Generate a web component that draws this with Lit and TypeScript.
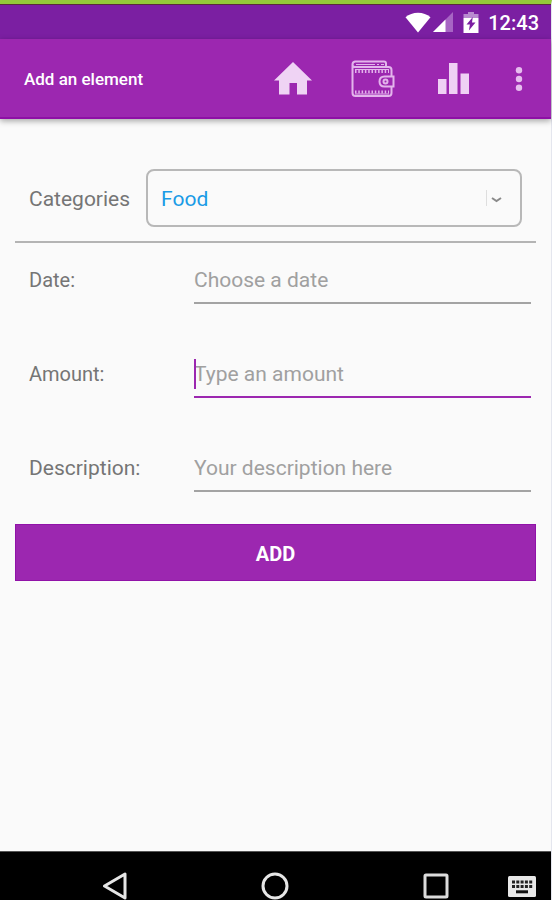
import { LitElement, html, css } from "lit";
import { customElement, state } from "lit/decorators.js";

@customElement("status-bar")
class StatusBar extends LitElement {
  static styles = css`
    :host {
      display: flex;
      align-items: center;
      justify-content: flex-end;
      height: 35px;
      padding: 1px 12px 0 0;
      background: #7b1fa2;
      border-top: 1px solid #5a2a3c;
      box-sizing: border-box;
      color: #fff;
    }
    .wifi { margin-right: 2px; }
    .signal, .battery { margin-right: 9px; }
    .clock {
      font-size: 20px;
      line-height: 24px;
      font-weight: 500;
    }
    svg { display: block; }
  `;

  render() {
    return html`
      <svg class="wifi" width="26" height="22" viewBox="0 0 26 22" aria-hidden="true">
        <path fill="#fff" d="M13 20.500 0.500 5.300C4 2.200 8.200 0.700 13 0.700s9 1.500 12.500 4.600z" />
      </svg>
      <svg class="signal" width="21" height="21" viewBox="0 0 21 21" aria-hidden="true">
        <path fill="#a765c4" d="M20 0v20H0z" />
        <path fill="#fff" d="M12.500 7.500v12.500H0z" />
      </svg>
      <svg class="battery" width="16" height="22" viewBox="0 0 16 22" aria-hidden="true">
        <path fill="#b98ad0" d="M5 0h6v2h4.500v4H0.500v-4H5z" />
        <path fill="#fff" d="M0.500 6h15v15H0.500z" />
        <path fill="#7b1fa2" d="M9.800 5 3.500 12.500h3.400l-1 6L12.500 10.500H9z" />
      </svg>
      <span class="clock">12:43</span>
    `;
  }
}

@customElement("app-bar")
class AppBar extends LitElement {
  static styles = css`
    :host {
      display: flex;
      align-items: center;
      height: 80px;
      padding: 2px 16px 0 24px;
      box-sizing: border-box;
      background: #9c27b0;
      border-bottom: 2px solid #8e0fa6;
      box-shadow: 0 2px 6px rgba(0, 0, 0, 0.35);
      position: relative;
      color: #fff;
    }
    h1 {
      flex: 1;
      margin: 0;
      font-size: 17px;
      line-height: 24px;
      font-weight: 500;
    }
    nav { display: flex; align-items: center; }
    button {
      display: grid;
      place-items: center;
      height: 48px;
      width: 80px;
      padding: 0;
      border: 0;
      background: none;
      cursor: pointer;
    }
    .more { width: 32px; margin-left: 10px; }
    svg { display: block; }
  `;

  render() {
    return html`
      <h1>Add an element</h1>
      <nav>
        <button aria-label="Home">
          <svg width="40" height="34" viewBox="0 0 40 34">
            <path fill="#efd3f4" d="M20 0 39 18.500H34V32.500H24V21H16.500V32.500H6V18.500H1z" />
          </svg>
        </button>
        <button aria-label="Wallet">
          <svg width="44" height="38" viewBox="0 0 44 38" fill="none" stroke="#e3b4ec" stroke-width="2">
            <path d="M1.500 4.500V33q0 3 3 3H37.500q3 0 3-3V26.500M40.500 16.500V10q0-3-3-3H4q-2.500 0-2.500-2.500T4 1.500H33q2 0 2 2V7" />
            <path d="M5 4.500H24M26 4.500h2M30 4.500h3" stroke-width="1" />
            <path d="M42.500 16.500H33.500q-5 0-5 5t5 5h9z" />
            <circle cx="34.500" cy="21.500" r="2" />
            <path d="M4 11.500H38M4 32H38" stroke-width="3" stroke-dasharray="1.500 1.800" />
            <path d="M4 9.500H38M4 34H38" stroke-width="1" />
          </svg>
        </button>
        <button aria-label="Statistics">
          <svg width="32" height="32" viewBox="0 0 32 32" fill="#efd0f4">
            <path d="M1 16h8.500v15H1zM12 0h8.500v31h-8.500zM23.500 10.500H32V31h-8.500z" />
          </svg>
        </button>
        <button class="more" aria-label="More options">
          <svg width="8" height="24" viewBox="0 0 8 24" fill="#e6bdee">
            <circle cx="4" cy="3.300" r="3.200" />
            <circle cx="4" cy="12" r="3.200" />
            <circle cx="4" cy="20.700" r="3.200" />
          </svg>
        </button>
      </nav>
    `;
  }
}

@customElement("expense-form")
class ExpenseForm extends LitElement {
  @state() private category = "Food";

  static styles = css`
    :host {
      display: block;
      padding: 50px 15px 0;
    }
    form { display: flex; flex-direction: column; }
    .category {
      display: flex;
      align-items: center;
      gap: 16px;
      padding: 0 14px 14px;
      border-bottom: 2px solid #b4b4b4;
    }
    label {
      color: #757575;
      font-size: 20px;
      line-height: 28px;
    }
    .wide { font-size: 21px; }
    .category label { padding-top: 2px; }
    .picker {
      flex: 1;
      display: grid;
      align-items: center;
    }
    .picker > * { grid-area: 1 / 1; }
    .picker svg { justify-self: end; margin-right: 17px; pointer-events: none; }
    select {
      appearance: none;
      width: 100%;
      height: 58px;
      padding: 2px 48px 0 13px;
      border: 2px solid #b8b8b8;
      border-radius: 8px;
      background: transparent;
      color: #1a9be6;
      font: inherit;
      font-size: 21px;
      outline: none;
    }
    .rows { padding-top: 12px; }
    .row {
      display: grid;
      grid-template-columns: 165px 1fr;
      align-items: center;
      padding: 0 5px 0 14px;
      margin-bottom: 45px;
    }
    .row:last-child { margin-bottom: 32px; }
    input {
      min-width: 0;
      width: 100%;
      height: 49px;
      box-sizing: border-box;
      padding: 2px 0 0;
      border: 0;
      border-bottom: 2px solid #a3a3a3;
      border-radius: 0;
      background: transparent;
      color: #424242;
      font: inherit;
      font-size: 21px;
      outline: none;
    }
    input::placeholder { color: #a0a0a0; opacity: 1; }
    .field { display: grid; align-items: center; }
    .field > * { grid-area: 1 / 1; }
    .active input { border-bottom-color: #9c27b0; caret-color: transparent; }
    .caret { width: 2px; height: 30px; background: #9c27b0; }
    .add {
      height: 57px;
      padding: 2px 0 0;
      border: 1px solid #9112a8;
      background: #9c27b0;
      color: #fff;
      font: inherit;
      font-size: 20px;
      font-weight: 700;
      cursor: pointer;
    }
  `;

  render() {
    return html`
      <form @submit=${(e: Event) => e.preventDefault()}>
        <div class="category">
          <label class="wide" for="category">Categories</label>
          <div class="picker">
            <select id="category" @change=${(e: Event) => (this.category = (e.target as HTMLSelectElement).value)}>
              <option ?selected=${this.category === "Food"}>Food</option>
            </select>
            <svg width="20" height="18" viewBox="0 0 20 18" fill="none" aria-hidden="true">
              <path stroke="#dedede" d="M1.500 1v16" />
              <path stroke="#8a8a8a" stroke-width="2" d="M7 9l4.500 3 4.500-3" />
            </svg>
          </div>
        </div>
        <div class="rows">
          <div class="row">
            <label for="date">Date:</label>
            <div class="field"><input id="date" type="text" placeholder="Choose a date" /></div>
          </div>
          <div class="row">
            <label for="amount">Amount:</label>
            <div class="field active">
              <input id="amount" type="text" inputmode="decimal" placeholder="Type an amount" />
              <span class="caret"></span>
            </div>
          </div>
          <div class="row">
            <label class="wide" for="description">Description:</label>
            <div class="field"><input id="description" type="text" placeholder="Your description here" /></div>
          </div>
        </div>
        <button class="add" type="submit">ADD</button>
      </form>
    `;
  }
}

@customElement("navigation-bar")
class NavigationBar extends LitElement {
  static styles = css`
    :host {
      display: grid;
      grid-template-columns: 35px 1fr 1fr 1fr 35px;
      align-items: end;
      height: 49px;
      box-sizing: border-box;
      background: #000;
      border-top: 1px solid #555;
    }
    button {
      display: grid;
      place-items: center;
      height: 28px;
      padding: 0;
      border: 0;
      background: none;
      cursor: pointer;
    }
    .back { grid-column: 2; }
    .keyboard { justify-self: end; margin-right: 15px; }
    svg { display: block; }
  `;

  render() {
    return html`
      <button class="back" aria-label="Back">
        <svg width="24" height="28" viewBox="0 0 24 28">
          <path fill="none" stroke="#e6e6e6" stroke-width="3" stroke-linejoin="round" d="M22 2v24L1.500 14z" />
        </svg>
      </button>
      <button aria-label="Home">
        <svg width="28" height="28" viewBox="0 0 28 28">
          <circle cx="14" cy="14" r="12" fill="none" stroke="#e6e6e6" stroke-width="3" />
        </svg>
      </button>
      <button aria-label="Recent apps">
        <svg width="26" height="26" viewBox="0 0 26 26">
          <rect x="2" y="2" width="22" height="22" rx="1" fill="none" stroke="#dcdcdc" stroke-width="3" />
        </svg>
      </button>
      <button class="keyboard" aria-label="Keyboard">
        <svg width="28" height="21" viewBox="0 0 28 21">
          <rect width="28" height="21" rx="1.500" fill="#e8e8e8" />
          <path stroke="#222" stroke-width="3" stroke-dasharray="3 1.300" d="M4 6h21M4 10.500h21" />
          <path stroke="#111" stroke-width="3" d="M8 15.800h12" />
        </svg>
      </button>
    `;
  }
}

@customElement("app-root")
class AppRoot extends LitElement {
  static styles = css`
    :host {
      display: flex;
      flex-direction: column;
      min-height: 100vh;
      box-sizing: border-box;
      border-top: 4px solid #94c93a;
      border-right: 1px solid #e4e6ee;
      background: #fafafa;
      font-family: Roboto, "Liberation Sans", sans-serif;
    }
    main { flex: 1; }
  `;

  render() {
    return html`
      <status-bar></status-bar>
      <app-bar></app-bar>
      <main><expense-form></expense-form></main>
      <navigation-bar></navigation-bar>
    `;
  }
}
